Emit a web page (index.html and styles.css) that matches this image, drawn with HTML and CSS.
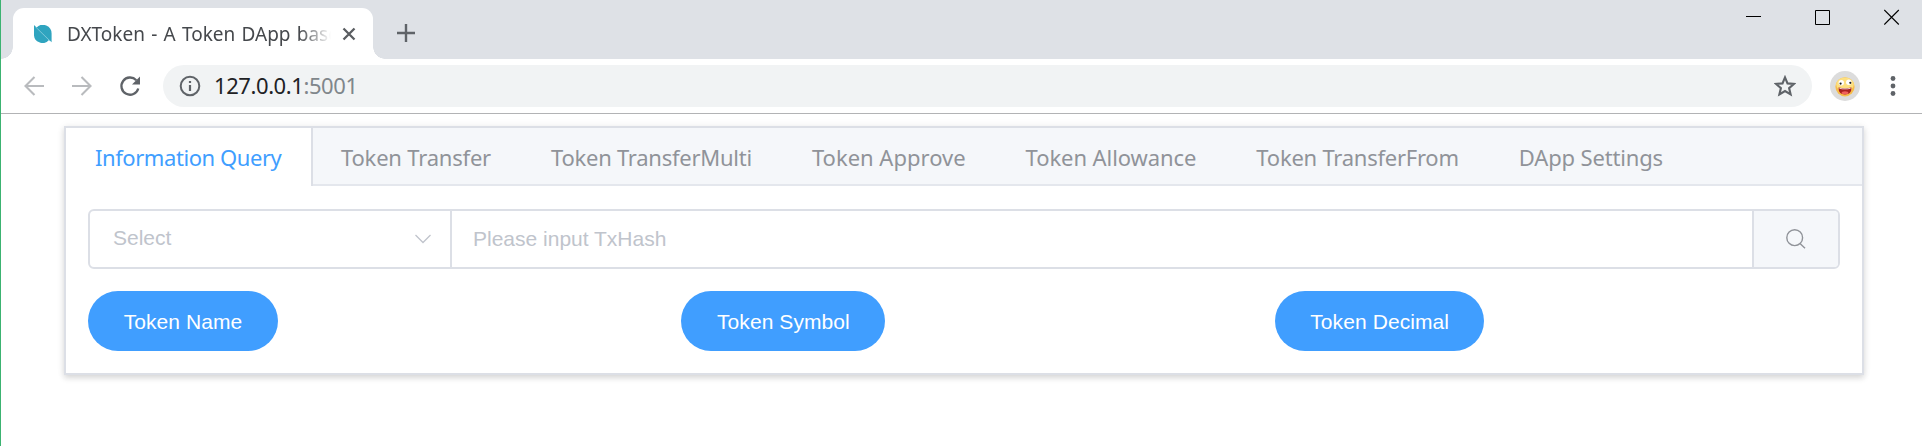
FILE: index.html
```html
<!DOCTYPE html>
<html lang="en">
<head>
<meta charset="utf-8">
<title>DXToken - A Token DApp based on Ontology</title>
<link rel="stylesheet" href="styles.css">
</head>
<body>
<div class="window">
  <header class="tabstrip">
    <div class="browser-tab">
      <svg class="favicon" width="18" height="18" viewBox="0 0 18 18"><path d="M0 0L17.6 17.2V8.8A8.8 8.8 0 0 0 2.6 2.4zM0 0V8.8A8.6 8.6 0 0 0 15 15.1z" fill="#2fa4bf"/><path d="M1.2 1.6L16 16" stroke="#7cc8da" stroke-width=".8"/></svg>
      <span class="browser-tab-title">DXToken - A Token DApp base</span>
      <svg class="tab-close" width="14" height="14" viewBox="0 0 14 14"><path d="M1.5 1.5l11 11M12.500 1.500l-11 11" stroke="#5a5d61" stroke-width="2.300"/></svg>
    </div>
    <svg class="new-tab" width="18" height="18" viewBox="0 0 18 18"><path d="M9 0v18M0 9h18" stroke="#5f6368" stroke-width="2.400"/></svg>
    <div class="window-controls">
      <svg width="16" height="16" viewBox="0 0 16 16"><path d="M0 7.500h15" stroke="#000"/></svg>
      <svg width="16" height="16" viewBox="0 0 16 16"><path d="M.5 1.500h14v14H.5z" stroke="#000" fill="none"/></svg>
      <svg width="16" height="16" viewBox="0 0 16 16"><path d="M.3 1l14.500 14.500M14.800 1L.3 15.500" stroke="#000" stroke-width="1.100"/></svg>
    </div>
  </header>
  <nav class="toolbar">
    <svg class="back" width="20" height="20" viewBox="0 0 20 20"><path d="M20 10H2M10.500 1L1.500 10l9 9" fill="none" stroke="#b9bbbe" stroke-width="2.100"/></svg>
    <svg class="forward" width="20" height="20" viewBox="0 0 20 20"><path d="M0 10h18M9.500 1l9 9-9 9" fill="none" stroke="#b9bbbe" stroke-width="2.100"/></svg>
    <svg class="reload" width="22" height="22" viewBox="0 0 22 22"><path d="M19.300 13.500A8.600 8.600 0 1 1 17.300 5.200" fill="none" stroke="#5f6368" stroke-width="2.300"/><path d="M21 1.500v8h-8z" fill="#5f6368"/></svg>
    <div class="address">
      <svg class="info" width="22" height="22" viewBox="0 0 22 22"><circle cx="11" cy="11" r="9.300" fill="none" stroke="#5f6368" stroke-width="2"/><path d="M11 10v6M11 6v2" stroke="#5f6368" stroke-width="2.200"/></svg>
      <span class="url">127.0.0.1<span class="port">:5001</span></span>
      <svg class="star" width="22" height="22" viewBox="0 0 22 22"><path d="M11 2.400l2.500 6 6.500.5-4.900 4.200 1.500 6.300L11 16l-5.600 3.400 1.500-6.300L2 8.900l6.500-.5z" fill="none" stroke="#5f6368" stroke-width="2.100"/></svg>
    </div>
    <svg class="avatar" width="30" height="30" viewBox="0 0 30 30"><circle cx="15" cy="15" r="15" fill="#dcdcdc"/><circle cx="15" cy="15.800" r="9.600" fill="#f6bd4b"/><ellipse cx="15" cy="13.500" rx="8.800" ry="7" fill="#fddf80"/><circle cx="11.300" cy="11.800" r="2.700" fill="#fff"/><circle cx="18.800" cy="11.200" r="2.700" fill="#fff"/><circle cx="10.600" cy="12.600" r="1.100" fill="#222"/><circle cx="20.300" cy="11.800" r="1.100" fill="#222"/><path d="M8.500 16.500q6.500 1.500 13 0 0 7-6.500 7t-6.500-7z" fill="#a91f1f"/><path d="M9.500 17q5.500 1.200 11 0v.8q-5.500 1-11 0z" fill="#fff"/><ellipse cx="15" cy="21.700" rx="3.300" ry="1.500" fill="#f0605a"/></svg>
    <svg class="menu" width="6" height="20" viewBox="0 0 6 20"><g fill="#5f6368"><circle cx="3" cy="2.500" r="2.400"/><circle cx="3" cy="10" r="2.400"/><circle cx="3" cy="17.500" r="2.400"/></g></svg>
  </nav>
  <main class="page">
    <section class="card">
      <div class="tabs">
        <div class="tab tab-active">Information Query</div>
        <div class="tab tab-transfer">Token Transfer</div>
        <div class="tab tab-multi">Token TransferMulti</div>
        <div class="tab">Token Approve</div>
        <div class="tab tab-allowance">Token Allowance</div>
        <div class="tab tab-from">Token TransferFrom</div>
        <div class="tab tab-settings">DApp Settings</div>
      </div>
      <div class="panel">
        <div class="search-row">
          <div class="select"><span>Select</span><svg width="18" height="10" viewBox="0 0 18 10"><path d="M1.500 1L9 8.500 16.500 1" fill="none" stroke="#c0c4cc" stroke-width="1.300"/></svg></div>
          <div class="hash-input">Please input TxHash</div>
          <div class="search-button"><svg width="20" height="20" viewBox="0 0 20 20"><circle cx="8.700" cy="8.700" r="7.900" fill="none" stroke="#909399" stroke-width="1.400"/><path d="M14 14.500l5 4.800" stroke="#909399" stroke-width="1.400"/></svg></div>
        </div>
        <div class="actions">
          <div><button class="pill">Token Name</button></div>
          <div><button class="pill">Token Symbol</button></div>
          <div><button class="pill">Token Decimal</button></div>
        </div>
      </div>
    </section>
  </main>
</div>
</body>
</html>
```
FILE: styles.css
```css
* { box-sizing: border-box; }
body { margin: 0; background: #fff; font-family: "Noto Sans", "Open Sans", sans-serif; }
svg { display: block; flex: none; }
.window { height: 446px; border-left: 1px solid #3cb371; overflow: hidden; }

.tabstrip { display: flex; align-items: flex-start; height: 59px; padding-left: 12px; background: #dee1e6; }
.browser-tab { position: relative; display: flex; align-items: center; width: 360px; height: 51px; margin-top: 8px; padding-left: 21px; border-radius: 11px 11px 0 0; background: #fff; }
.browser-tab::before, .browser-tab::after { content: ""; position: absolute; bottom: 0; width: 12px; height: 12px; }
.browser-tab::before { left: -12px; background: radial-gradient(circle at 0 0, transparent 11.5px, #fff 12px); }
.browser-tab::after { right: -12px; background: radial-gradient(circle at 100% 0, transparent 11.5px, #fff 12px); }
.browser-tab-title { width: 264px; margin-left: 15px; white-space: nowrap; color: #45484c; font-size: 19px; line-height: 30px; word-spacing: 1.3px; -webkit-mask-image: linear-gradient(90deg, #000 88%, transparent); mask-image: linear-gradient(90deg, #000 88%, transparent); }
.tab-close { margin-left: 11px; }
.new-tab { margin: 24px 0 0 24px; }
.window-controls { display: flex; gap: 53px; margin: 9px 22px 0 auto; }

.toolbar { display: flex; align-items: center; height: 55px; padding: 0 26px 1px 23px; border-bottom: 1px solid #b2b3b5; }
.forward { margin-left: 28px; }
.reload { margin-left: 27px; }
.address { display: flex; flex: 1; align-items: center; height: 42px; margin-left: 22px; padding: 0 16px; border-radius: 21px; background: #f1f3f4; }
.url { margin-left: 13px; padding-bottom: 2px; color: #202124; font-size: 22px; line-height: 40px; letter-spacing: -.42px; }
.port { color: #80868b; }
.star { margin-left: auto; }
.avatar { margin-left: 18px; }
.menu { margin-left: 30px; }

.page { padding: 12px 58px 0 63px; }
.card { height: 249px; border: 2px solid #dcdfe6; box-shadow: 0 3px 6px rgba(0, 0, 0, .14), 0 0 9px rgba(0, 0, 0, .05); }
.tabs { display: flex; height: 58px; border-bottom: 2px solid #e4e7ed; background: #f5f7fa; }
.tab { padding: 0 30px; color: #909399; font-size: 22px; line-height: 59px; white-space: nowrap; }
.tab-active { width: 247px; height: 58px; padding-left: 29px; border-right: 2px solid #dcdfe6; background: #fff; color: #409eff; letter-spacing: -.43px; }
.tab-transfer { padding-left: 28px; letter-spacing: -.2px; }
.tab-multi { letter-spacing: -.25px; }
.tab-allowance { letter-spacing: -.08px; }
.tab-from { letter-spacing: -.24px; }
.tab-settings { letter-spacing: -.15px; }
.panel { padding: 23px 22px; }
.search-row { display: flex; height: 60px; border: 2px solid #dcdfe6; border-radius: 6px; overflow: hidden; color: #c0c4cc; font: 21px/56px "Liberation Sans", Arial, sans-serif; }
.select { display: flex; align-items: center; justify-content: space-between; width: 362px; padding: 0 18px 0 23px; border-right: 2px solid #dcdfe6; }
.select span { padding-bottom: 2px; line-height: 54px; }
.hash-input { flex: 1; padding-left: 21px; }
.search-button { display: grid; place-items: center; width: 86px; border-left: 2px solid #dcdfe6; background: #f5f7fa; }
.actions { display: grid; grid-template-columns: repeat(3, 593.3px); margin-top: 22px; }
.pill { display: block; height: 60px; padding: 1px 35.300px 0 35.700px; border: 0; border-radius: 30px; background: #409eff; color: #fff; font: 21px/59px "Liberation Sans", Arial, sans-serif; letter-spacing: .08px; }
```
